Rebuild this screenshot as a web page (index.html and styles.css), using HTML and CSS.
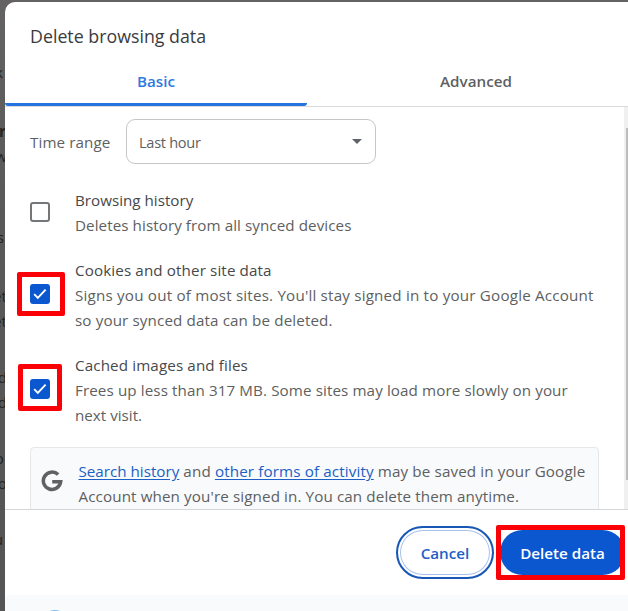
FILE: index.html
```html
<!DOCTYPE html>
<html lang="en">
<head>
<meta charset="utf-8">
<title>Delete browsing data</title>
<link rel="stylesheet" href="styles.css">
</head>
<body>
<div class="page">
  <div class="backdrop">
    <span class="bit bit-k">k</span>
    <span class="bit bit-bold">r</span>
    <span class="bit">w</span>
    <span class="bit bit-s">s</span>
    <span class="bit bit-et">et</span>
    <span class="bit">et</span>
    <span class="bit bit-d">d</span>
    <span class="bit">d</span>
    <span class="bit bit-o">o</span>
    <span class="bit">to</span>
    <span class="bit bit-u">u</span>
  </div>
  <main class="dialog">
    <h1 class="title">Delete browsing data</h1>
    <nav class="tabs">
      <div class="tab active">Basic</div>
      <div class="tab">Advanced</div>
    </nav>
    <section class="content">
      <div class="list">
        <div class="range">
          <span class="range-label">Time range</span>
          <div class="select"><span class="t-hour">Last hour</span><i class="caret"></i></div>
        </div>
        <div class="row row-history">
          <div class="check"><i class="box"></i></div>
          <div class="lines">
            <span class="name">Browsing history</span>
            <span class="t-d1">Deletes history from all synced devices</span>
          </div>
        </div>
        <div class="row">
          <div class="check"><i class="box on"><svg viewBox="0 0 20 20"><path d="M4.2 10.2 7.8 13.8l7.8-8.2"/></svg></i><b class="mark mark-cookies"></b></div>
          <div class="lines">
            <span class="name t-n2">Cookies and other site data</span>
            <span class="t-d2">Signs you out of most sites. You'll stay signed in to your Google Account</span>
            <span class="t-d3">so your synced data can be deleted.</span>
          </div>
        </div>
        <div class="row">
          <div class="check"><i class="box on"><svg viewBox="0 0 20 20"><path d="M4.2 10.2 7.8 13.8l7.8-8.2"/></svg></i><b class="mark mark-cache"></b></div>
          <div class="lines">
            <span class="name t-n3">Cached images and files</span>
            <span class="t-d4">Frees up less than 317 MB. Some sites may load more slowly on your</span>
            <span class="t-d5">next visit.</span>
          </div>
        </div>
        <div class="info">
          <svg class="google" viewBox="0 0 20 20"><path d="M15.6 4.2A7.9 7.9 0 1 0 17.9 10.6H10.2"/></svg>
          <div class="lines">
            <span class="t-i1"><a class="t-a1">Search history</a> and <a>other forms of activity</a> may be saved in your Google</span>
            <span class="t-i2">Account when you're signed in. You can delete them anytime.</span>
          </div>
        </div>
      </div>
      <div class="scroll"><i class="thumb"></i></div>
    </section>
    <footer class="actions">
      <div class="btn cancel">Cancel</div>
      <div class="btn delete">Delete data<b class="mark mark-delete"></b></div>
    </footer>
    <div class="account"><i class="avatar"></i></div>
  </main>
</div>
</body>
</html>
```
FILE: styles.css
```css
* { box-sizing: border-box; }
body { margin: 0; font-family: "Open Sans", "Noto Sans", sans-serif; font-size: 15.2px; line-height: 25px; color: #5e5f61; }
.page { display: flex; width: 628px; height: 611px; overflow: hidden; background: linear-gradient(#646262, #595959 220px, #555 611px); padding-top: 2px; }
.backdrop { width: 5px; flex: none; overflow: hidden; display: flex; flex-direction: column; align-items: flex-end; padding-top: 58px; color: #242424; }
.bit { height: 25px; flex: none; margin-right: -2px; }
.bit-k { margin-right: 2px; }
.bit-bold { margin-top: 34px; margin-right: -1px; font-weight: 700; }
.bit-s { margin-top: 56px; margin-right: 1px; }
.bit-et { margin-top: 34px; }
.bit-d { margin-top: 31px; }
.bit-o { margin-top: 31px; margin-right: 1px; }
.bit-u { margin-top: 31px; margin-right: 2px; }
.dialog { flex: none; width: 623px; height: 609px; background: #fff; border-radius: 10px 0 0 0; display: flex; flex-direction: column; overflow: hidden; }
.title { flex: none; margin: 0; padding: 22px 0 0 25px; height: 56px; font-size: 17.8px; font-weight: 400; color: #3a3b3e; }
.tabs { flex: none; display: flex; height: 49px; border-bottom: 1px solid #d9dadc; font-weight: 600; }
.tab { flex: none; width: 302px; height: 48px; text-align: center; padding-top: 11px; }
.tab + .tab { width: 338px; }
.active { color: #3079e0; border-bottom: 3px solid #2573df; border-radius: 0 0 3px 3px; }
.content { flex: none; display: flex; height: 402px; overflow: hidden; }
.list { flex: 1; min-width: 0; padding: 12px 25px 0; }
.range { display: flex; align-items: center; height: 45px; }
.range-label { width: 96px; padding-top: 2px; letter-spacing: .1px; }
.select { display: flex; align-items: center; justify-content: space-between; width: 250px; height: 45px; border: 1px solid #c5c6c8; border-radius: 9px; padding: 2px 13px 0 12px; }
.caret { border: 5px solid transparent; border-top-color: #5f6368; border-bottom: 0; margin-bottom: 3px; }
.row { display: flex; align-items: center; margin-top: 20px; }
.row-history { margin-top: 24px; }
.check { position: relative; width: 45px; height: 20px; flex: none; }
.row .check { margin-top: -3px; }
.lines { display: flex; flex-direction: column; align-items: flex-start; white-space: nowrap; }
.name { color: #47484a; }
.t-hour { font-size: 14.6px; letter-spacing: -.3px; }
.t-d1 { letter-spacing: .07px; }
.t-n2, .t-n3, .t-d3 { letter-spacing: .12px; }
.t-d2 { letter-spacing: .19px; }
.t-d4 { letter-spacing: .1px; }
.t-i1 { letter-spacing: .13px; }
.t-i2 { letter-spacing: .11px; }
.t-a1 { letter-spacing: 0; }
.box { display: block; width: 20px; height: 20px; border: 2px solid #747779; border-radius: 3px; }
.on { background: #0b57d0; border: 0; }
.on svg { display: block; width: 20px; height: 20px; fill: none; stroke: #fff; stroke-width: 1.9; }
.mark { position: absolute; border: 5px solid #fb0007; border-radius: 2px; }
.mark-cookies { left: -13px; top: -12px; width: 48px; height: 44px; }
.mark-cache { left: -12px; top: -15px; width: 44px; height: 47px; }
.info { display: flex; width: 569px; height: 80px; margin-top: 19px; padding: 11px 0 0 11px; background: #f8fafc; border: 1px solid #e5e7ea; border-radius: 4px; }
.google { width: 22px; height: 22px; margin: 11px 15.5px 0 -1px; fill: none; stroke: #5f6163; stroke-width: 3.2; flex: none; }
.info a { color: #1c5fc5; text-decoration: underline; text-underline-offset: 2px; }
.scroll { width: 4px; background: #f0f0f0; flex: none; padding: 21px 0 0 2px; }
.thumb { display: block; width: 2px; height: 352px; background: #bcbcbc; }
.actions { display: flex; height: 86px; flex: none; border-top: 1px solid #d5d6d8; padding: 16px 0 0 391px; gap: 6px; font-weight: 600; }
.btn { position: relative; flex: none; display: flex; align-items: center; justify-content: center; padding-top: 2px; }
.cancel { width: 98px; height: 53px; border: 2px solid #1857b5; border-radius: 27px; color: #1e60c6; box-shadow: inset 0 0 0 2px #fff, inset 0 0 0 3px #a9c2ec; }
.delete { width: 125px; height: 45px; margin-top: 4px; border-radius: 23px; background: #0b57d0; color: #fff; }
.mark-delete { left: -4px; top: -5px; width: 129px; height: 55px; }
.account { flex: none; height: 40px; overflow: hidden; background: #f8fafb; border-radius: 4px 0 0 0; padding: 15px 0 0 37px; }
.avatar { display: block; width: 26px; height: 26px; border-radius: 50%; background: #7dbcf5; }
```
